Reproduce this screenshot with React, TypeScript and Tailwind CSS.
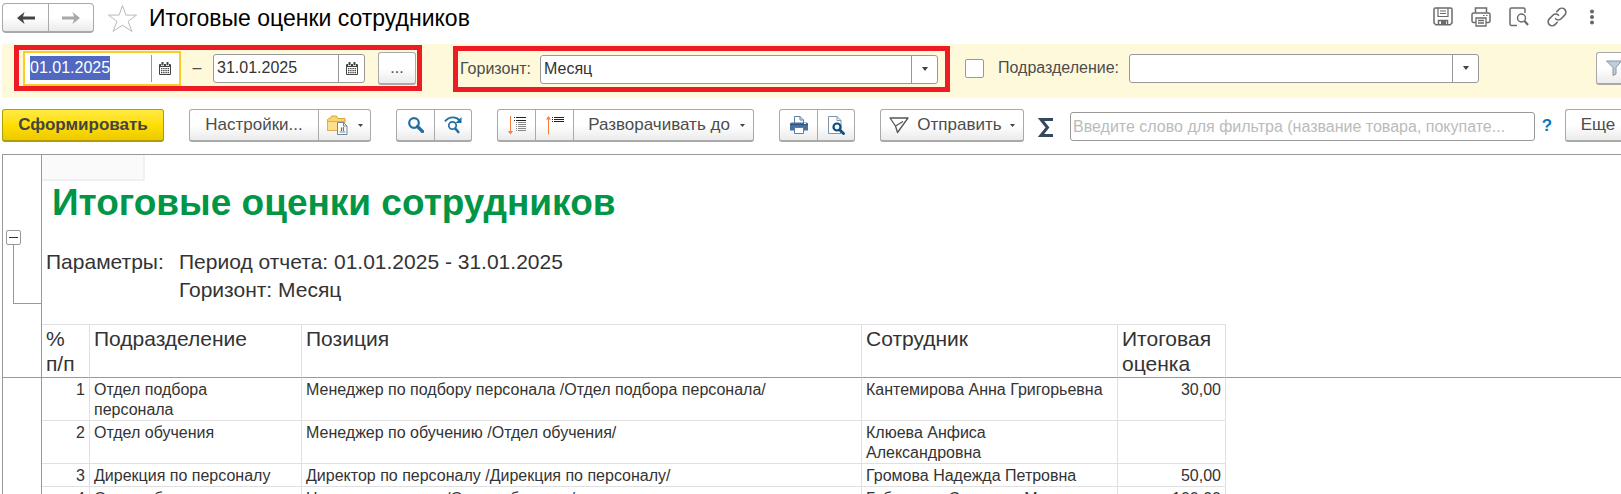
import { useEffect, useRef } from "react";
import type { ReactNode } from "react";

const rows = [
  {
    id: 1,
    department: "Отдел подбора\nперсонала",
    position: "Менеджер по подбору персонала /Отдел подбора персонала/",
    employee: "Кантемирова Анна Григорьевна",
    score: "30,00",
  },
  {
    id: 2,
    department: "Отдел обучения",
    position: "Менеджер по обучению /Отдел обучения/",
    employee: "Клюева Анфиса\nАлександровна",
    score: "",
  },
  {
    id: 3,
    department: "Дирекция по персоналу",
    position: "Директор по персоналу /Дирекция по персоналу/",
    employee: "Громова Надежда Петровна",
    score: "50,00",
  },
  {
    id: 4,
    department: "Отдел обучения",
    position: "Начальник отдела /Отдел обучения/",
    employee: "Габдулина Светлана Марковна",
    score: "100,00",
  },
];

const buttonSkin =
  "flex shrink-0 items-center justify-center border border-[#a9a9a9] border-b-2 bg-gradient-to-b from-white from-50% to-[#ebebeb]";

function Caret() {
  return (
    <svg width="6" height="4" viewBox="0 0 6 4" fill="#444" aria-hidden="true">
      <path d="M0 0h6L3.500 3.500h-1z" />
    </svg>
  );
}

function SmallCaret() {
  return (
    <svg width="5" height="3" viewBox="0 0 5 3" fill="#444" aria-hidden="true">
      <path d="M0 0h5L2.500 3z" />
    </svg>
  );
}

function CalendarIcon() {
  return (
    <svg width="12" height="13" viewBox="0 0 12 13" fill="#444" aria-hidden="true">
      <path d="M1 2h10a1 1 0 0 1 1 1v9a1 1 0 0 1-1 1H1a1 1 0 0 1-1-1V3a1 1 0 0 1 1-1z" />
      <path d="M1 5h10v7H1z" fill="#fff" />
      <path d="M2 6h1.400v1.300H2zM4.200 6h1.400v1.300H4.200zM6.400 6h1.400v1.300H6.400zM8.600 6H10v1.300H8.600z" />
      <path d="M2 8h1.400v1.300H2zM4.200 8h1.400v1.300H4.200zM6.400 8h1.400v1.300H6.400zM8.600 8H10v1.300H8.600z" />
      <path d="M2 10h1.400v1.300H2zM4.200 10h1.400v1.300H4.200zM6.400 10h1.400v1.300H6.400zM8.600 10H10v1.300H8.600z" />
      <path d="M2 0h3v4H2zM7 0h3v4H7z" fill="#fff" />
      <path d="M2.500 0h2v3.300h-2zM7.500 0h2v3.300h-2z" />
    </svg>
  );
}

function SelectBox({
  label,
  className,
  arrowClass,
  children,
}: {
  label: string;
  className: string;
  arrowClass: string;
  children: ReactNode;
}) {
  return (
    <div className={`relative h-[29px] ${className}`}>
      <select
        id={label}
        className="h-full w-full appearance-none rounded-[3px] border border-[#999] bg-white pl-[3px] text-[#333] outline-none"
      >
        {children}
      </select>
      <span
        className={`pointer-events-none absolute inset-y-0 right-0 flex items-center justify-center border-l border-[#999] ${arrowClass}`}
      >
        <Caret />
      </span>
    </div>
  );
}

function TitleBar() {
  return (
    <header className="flex h-11 items-start pt-[3px]">
      <div className="flex h-[30px]">
        <button
          aria-label="Назад"
          className={`w-[47px] rounded-l-[4px] ${buttonSkin}`}
        >
          <svg width="18" height="12" viewBox="0 0 18 12" fill="#444" aria-hidden="true">
            <path d="M7.500 0L0 6l7.500 6L6 7.500h12v-3H6z" />
          </svg>
        </button>
        <button
          aria-label="Вперед"
          className={`-ml-px w-[46px] rounded-r-[4px] ${buttonSkin}`}
        >
          <svg width="18" height="12" viewBox="0 0 18 12" fill="#a8a8a8" aria-hidden="true">
            <path d="M10.500 0L18 6l-7.500 6L12 7.500H0v-3h12z" />
          </svg>
        </button>
      </div>
      <button aria-label="В избранное" className="ml-3">
        <svg width="32" height="30" viewBox="0 0 32 30" fill="none" stroke="#b4bac0" aria-hidden="true">
          <path d="M16.500 2.500l3.400 9.600h10.600l-8.400 6.300 3.800 10-9.400-6.200-9.400 6.200 3.800-10-8.400-6.300h10.600z" />
        </svg>
      </button>
      <h1 className="ml-[11px] text-[23px] leading-[30px] text-black">
        Итоговые оценки сотрудников
      </h1>
      <div className="mr-[22px] ml-auto flex items-start gap-[18px] pt-[4px]">
        <button aria-label="Сохранить">
          <svg width="20" height="20" viewBox="0 0 20 20" fill="none" stroke="#6b6b6b" strokeWidth="1.500" aria-hidden="true">
            <path d="M1 2.500a1.500 1.500 0 0 1 1.500-1.500h15A1.500 1.500 0 0 1 19 2.500v13.500l-1.800 1.800H2.800L1 16z" />
            <path d="M5 1v8.500h10V1M7 4h6M7 6.500h6" strokeWidth="1.200" />
            <path d="M5.500 17.500v-4h9v4" />
            <path d="M8 14h5v3.500H8z" fill="#6b6b6b" stroke="none" />
          </svg>
        </button>
        <button aria-label="Печать">
          <svg width="20" height="20" viewBox="0 0 20 20" fill="none" stroke="#6b6b6b" strokeWidth="1.500" aria-hidden="true">
            <path d="M4.500 5.500V1h11v4.500" />
            <path d="M5 15.500H2.500A1.500 1.500 0 0 1 1 14V7.500A1.500 1.500 0 0 1 2.500 6h15A1.500 1.500 0 0 1 19 7.500V14a1.500 1.500 0 0 1-1.500 1.500H15" />
            <path d="M5 11h10v8H5zM7 13.500h6M7 16h6" strokeWidth="1.300" />
            <path d="M12 8.500h1.500M15 8.500h1.500" strokeWidth="1.200" />
          </svg>
        </button>
        <button aria-label="Предварительный просмотр">
          <svg width="20" height="20" viewBox="0 0 20 20" fill="none" stroke="#6b6b6b" strokeWidth="1.500" aria-hidden="true">
            <path d="M8 18.500H2.500A1.500 1.500 0 0 1 1 17V2.500A1.500 1.500 0 0 1 2.500 1h12A1.500 1.500 0 0 1 16 2.500V6" />
            <circle cx="12.500" cy="11" r="4" />
            <path d="M15.500 14l3.500 4" strokeWidth="2.200" />
          </svg>
        </button>
        <button aria-label="Получить ссылку">
          <svg width="20" height="20" viewBox="0 0 20 20" fill="none" stroke="#6b6b6b" strokeWidth="1.600" strokeLinecap="round" aria-hidden="true">
            <path d="M8.500 11.700a4 4 0 0 0 5.600 0l3.600-3.600a4 4 0 0 0-5.700-5.700l-2.300 2.300" />
            <path d="M11.500 8.300a4 4 0 0 0-5.600 0l-3.600 3.600a4 4 0 0 0 5.700 5.700l2.300-2.300" />
          </svg>
        </button>
        <button aria-label="Ещё" className="px-[3px]">
          <svg width="8" height="20" viewBox="0 0 8 20" fill="#666" aria-hidden="true">
            <circle cx="4" cy="4.500" r="2" />
            <circle cx="4" cy="10" r="2" />
            <circle cx="4" cy="15.500" r="2" />
          </svg>
        </button>
      </div>
    </header>
  );
}

function FilterBar() {
  const startRef = useRef<HTMLInputElement>(null);

  useEffect(() => {
    startRef.current?.focus();
    startRef.current?.select();
  }, []);

  return (
    <section className="flex h-[54px] items-start bg-[#fff9db] pt-px">
      <div className="ml-3 flex h-[46px] w-[408px] shrink-0 items-center border-5 border-[#ed1c24] pl-[4px]">
        <div className="flex h-[35px] w-[158px] items-stretch border-2 border-[#fdcb2b] bg-white p-0.5">
          <input
            ref={startRef}
            aria-label="Начало периода"
            defaultValue="01.01.2025"
            className="w-0 flex-1 pl-[3px] text-[#333] outline-none selection:bg-[#5068c0] selection:text-white"
          />
          <button
            aria-label="Выбрать начало периода"
            className="flex w-[26px] items-center justify-center border-l border-[#999]"
          >
            <CalendarIcon />
          </button>
        </div>
        <span className="w-8 text-center">–</span>
        <div className="flex h-[29px] w-[152px] rounded-[3px] border border-[#999] bg-white">
          <input
            aria-label="Конец периода"
            defaultValue="31.01.2025"
            className="w-0 flex-1 pl-[3px] text-[#333] outline-none"
          />
          <button
            aria-label="Выбрать конец периода"
            className="flex w-[26px] items-center justify-center border-l border-[#999]"
          >
            <CalendarIcon />
          </button>
        </div>
        <button
          aria-label="Выбрать период"
          className={`ml-[13px] h-[33px] w-[38px] rounded-[3px] ${buttonSkin}`}
        >
          ...
        </button>
      </div>

      <div className="mt-px ml-[31px] flex h-[46px] w-[497px] shrink-0 items-center border-5 border-[#ed1c24] pr-[7px] pl-0.5">
        <label htmlFor="horizon" className="w-20 shrink-0">
          Горизонт:
        </label>
        <SelectBox label="horizon" className="flex-1" arrowClass="w-[27px]">
          <option>Месяц</option>
        </SelectBox>
      </div>

      <div className="flex h-[46px] flex-1 items-center">
        <input
          type="checkbox"
          aria-label="Отбор по подразделению"
          className="ml-[15px] size-[19px] shrink-0 appearance-none rounded-[2px] border border-[#999] bg-white"
        />
        <label htmlFor="department" className="ml-3.5 w-[131px] shrink-0">
          Подразделение:
        </label>
        <SelectBox
          label="department"
          className="w-[350px] shrink-0"
          arrowClass="w-[27px]"
        >
          <option></option>
        </SelectBox>
        <button
          aria-label="Настройки отбора"
          className={`ml-auto h-[33px] w-[25px] rounded-l-[3px] border-r-0 ${buttonSkin}`}
        >
          <svg width="15" height="16" viewBox="0 0 15 16" className="ml-2 shrink-0" aria-hidden="true">
            <path d="M.5 1h15L10 7.500V14l-3 1.500V7.500z" fill="#c3cdd6" stroke="#8496a6" />
          </svg>
        </button>
      </div>
    </section>
  );
}

function Toolbar() {
  return (
    <section className="flex h-14 items-start pt-[11px] text-[17px]">
      <button className="h-[33px] w-[162px] shrink-0 rounded-[3px] border border-b-2 border-[#b39c00] bg-gradient-to-b from-[#ffea3d] via-[#ffdf00] to-[#ecc900] font-bold text-[#444]">
        Сформировать
      </button>

      <div className="ml-[25px] flex h-[33px] shrink-0">
        <button className={`w-[130px] rounded-l-[3px] ${buttonSkin}`}>
          Настройки...
        </button>
        <button
          aria-label="Варианты отчета"
          className={`-ml-px w-[53px] gap-[10px] rounded-r-[3px] ${buttonSkin}`}
        >
          <svg width="21" height="20" viewBox="0 0 21 20" aria-hidden="true">
            <path d="M.5 15.500V4.500l1-1H3l1.500-2.500h5L11 3.500h7v4" fill="#fbd46c" stroke="#d8a33c" />
            <path d="M.5 15.500v-9h17v9z" fill="#fddf8e" stroke="#e0ae4c" />
            <path d="M10.500 7.500h6l3.500 3.500v8.500h-9.500z" fill="#fff" stroke="#6f8799" />
            <path d="M16.500 7.500V11H20" fill="none" stroke="#6f8799" />
            <path d="M12.500 17h6" stroke="#6f8799" />
            <path d="M14.500 16v-3.500" stroke="#e03c31" strokeWidth="1.200" />
            <path d="M16.500 16v-4" stroke="#3f9c35" strokeWidth="1.200" />
          </svg>
          <SmallCaret />
        </button>
      </div>

      <div className="ml-[25px] flex h-[33px] shrink-0">
        <button aria-label="Найти" className={`w-[39px] rounded-l-[3px] ${buttonSkin}`}>
          <svg width="16" height="16" viewBox="0 0 16 16" fill="none" stroke="#1f6fa5" aria-hidden="true">
            <circle cx="6" cy="6" r="4.800" strokeWidth="2.200" />
            <path d="M9.500 9.500l5 5" strokeWidth="3.200" strokeLinecap="round" />
          </svg>
        </button>
        <button aria-label="Найти далее" className={`-ml-px w-[38px] rounded-r-[3px] ${buttonSkin}`}>
          <svg width="19" height="18" viewBox="0 0 19 18" fill="none" stroke="#1f6fa5" aria-hidden="true">
            <path d="M1 5.500C3 2.500 6 1.300 9 1.300c3 0 5 1.200 6.500 3" strokeWidth="1.800" />
            <path d="M17.500 1v6h-6z" fill="#1f6fa5" stroke="none" />
            <circle cx="8.500" cy="9.500" r="3.700" strokeWidth="1.700" />
            <path d="M11.300 12.500l3 3.500" strokeWidth="2.600" strokeLinecap="round" />
          </svg>
        </button>
      </div>

      <div className="ml-[25px] flex h-[33px] shrink-0">
        <button aria-label="Развернуть группы" className={`w-[39px] rounded-l-[3px] ${buttonSkin}`}>
          <svg width="18" height="19" viewBox="0 0 18 19" fill="none" aria-hidden="true">
            <path d="M2.500 0v16" stroke="#f47c3c" />
            <path d="M0 15h5l-2.500 3.500z" fill="#f47c3c" />
            <path d="M6 1.500h1M8 1.500h10M6 4.500h1M8 4.500h10" stroke="#222" />
            <path d="M8 6.500h1M10 6.500h8M8 8.500h1M10 8.500h8M8 10.500h1M10 10.500h8M8 12.500h1M10 12.500h8M8 14.500h1M10 14.500h8" stroke="#888" />
          </svg>
        </button>
        <button aria-label="Свернуть группы" className={`-ml-px w-[39px] ${buttonSkin}`}>
          <svg width="18" height="19" viewBox="0 0 18 19" fill="none" aria-hidden="true">
            <path d="M2.500 2v16.500" stroke="#f47c3c" />
            <path d="M0 3.500h5L2.500 0z" fill="#f47c3c" />
            <path d="M6 1.500h1M8 1.500h10M6 3.500h1M8 3.500h10M6 5.500h1M8 5.500h10" stroke="#222" />
          </svg>
        </button>
        <button className={`-ml-px w-[181px] gap-[10px] rounded-r-[3px] pl-[6px] ${buttonSkin}`}>
          Разворачивать до
          <SmallCaret />
        </button>
      </div>

      <div className="ml-[25px] flex h-[33px] shrink-0">
        <button aria-label="Печать отчета" className={`w-[39px] rounded-l-[3px] ${buttonSkin}`}>
          <svg width="18" height="18" viewBox="0 0 18 18" aria-hidden="true">
            <path d="M4.500 7V.5H10l3.500 3.500v3" fill="#fff" stroke="#5b7ea3" />
            <path d="M10 .5V4h3.500" fill="none" stroke="#5b7ea3" />
            <path d="M1.500 6.500h15A1.500 1.500 0 0 1 18 8v6.500H0V8a1.500 1.500 0 0 1 1.500-1.500z" fill="#47709c" />
            <path d="M0 8.500h18" stroke="#2f557f" />
            <path d="M14 7.500h2" stroke="#fff" />
            <path d="M4.500 11.500h9v6h-9z" fill="#fff" stroke="#5b7ea3" />
          </svg>
        </button>
        <button aria-label="Просмотр" className={`-ml-px w-[38px] rounded-r-[3px] ${buttonSkin}`}>
          <svg width="17" height="19" viewBox="0 0 17 19" fill="none" aria-hidden="true">
            <path d="M.5 17.500V.5h8.500l4 4v13z" fill="#fff" stroke="#7d93a8" />
            <path d="M9 .5v4h4" stroke="#7d93a8" />
            <circle cx="9" cy="11" r="3.500" fill="#fff" stroke="#0b4f80" strokeWidth="2.200" />
            <path d="M11.800 14l3.700 3.500" stroke="#0b4f80" strokeWidth="2.800" strokeLinecap="round" />
          </svg>
        </button>
      </div>

      <button className={`ml-[25px] h-[33px] w-[144px] gap-2 rounded-[3px] ${buttonSkin}`}>
        <svg width="20" height="17" viewBox="0 0 20 17" fill="none" stroke="#555" strokeWidth="1.300" strokeLinejoin="round" aria-hidden="true">
          <path d="M1 1h18L8.500 15.500l-2-6.500zM6.500 9L14 4.500" />
        </svg>
        Отправить
        <SmallCaret />
      </button>

      <button aria-label="Сумма" className="mt-[9px] ml-[14px] shrink-0">
        <svg width="16" height="19" viewBox="0 0 16 19" fill="none" stroke="#34495e" strokeWidth="3" aria-hidden="true">
          <path d="M15 1.500H3l6.500 8-6.500 8h12" />
        </svg>
      </button>

      <input
        type="search"
        aria-label="Фильтр"
        placeholder="Введите слово для фильтра (название товара, покупате..."
        className="mt-[3px] ml-4 h-[29px] min-w-0 flex-1 rounded-[3px] border border-[#999] bg-white px-0.5 text-[16px] text-ellipsis outline-none placeholder:text-[#bbb]"
      />
      <button aria-label="Справка" className="mt-0.5 w-[30px] shrink-0 pr-1.5 leading-[30px] font-bold text-[#1272b8]">
        ?
      </button>
      <button className={`h-[33px] w-14 rounded-l-[3px] border-r-0 pl-[9px] ${buttonSkin}`}>
        Еще
      </button>
    </section>
  );
}

function Report() {
  const headCell =
    "border-t border-r border-t-[#e0e0e0] border-r-[#e0e0e0] border-b border-b-[#999] px-[4px] py-px";
  const cell =
    "border-r border-b border-[#e0e0e0] px-[4px] pt-0.5 whitespace-pre-line";

  return (
    <main className="min-h-0 flex-1 overflow-hidden border-t border-l border-[#999] text-[#333]">
      <div className="flex h-[169px]">
        <div className="w-[38px] shrink-0 pt-[75px] pl-[3px]">
          <button
            aria-label="Свернуть группу"
            className="flex size-[15px] items-center justify-center rounded-[2px] border border-[#999]"
          >
            <span className="h-px w-[9px] bg-[#333]" />
          </button>
          <div className="ml-[7px] h-[59px] border-b border-l border-[#999]" />
        </div>
        <div className="flex-1 border-l border-[#999]">
          <div className="h-[26px] w-[103px] border-r-2 border-b-2 border-[#f0f0f0] bg-[#fafafa]" />
          <h2 className="pl-[10px] text-[37px] leading-[44px] font-bold text-[#009646]">
            Итоговые оценки сотрудников
          </h2>
          <dl className="mt-[23px] flex text-[21px] leading-7">
            <dt className="w-[137px] pl-[4px]">Параметры:</dt>
            <dd>
              Период отчета: 01.01.2025 - 31.01.2025
              <br />
              Горизонт: Месяц
            </dd>
          </dl>
        </div>
      </div>

      <table className="w-full table-fixed border-separate border-spacing-0 text-left leading-5">
        <colgroup>
          <col className="w-[39px]" />
          <col className="w-[48px]" />
          <col className="w-[212px]" />
          <col className="w-[560px]" />
          <col className="w-[256px]" />
          <col className="w-[108px]" />
          <col />
        </colgroup>
        <thead className="align-top text-[21px] leading-[25px]">
          <tr className="[&>th]:font-normal">
            <td className="border-r border-b border-[#999]" />
            <th className={headCell}>% п/п</th>
            <th className={headCell}>Подразделение</th>
            <th className={headCell}>Позиция</th>
            <th className={headCell}>Сотрудник</th>
            <th className={headCell}>Итоговая оценка</th>
            <td className="border-b border-[#999]" />
          </tr>
        </thead>
        <tbody className="align-top">
          {rows.map((row) => (
            <tr key={row.id}>
              <td className="border-r border-[#999]" />
              <td className={`text-right ${cell}`}>{row.id}</td>
              <td className={cell}>{row.department}</td>
              <td className={cell}>{row.position}</td>
              <td className={cell}>{row.employee}</td>
              <td className={`text-right ${cell}`}>{row.score}</td>
              <td />
            </tr>
          ))}
        </tbody>
      </table>
    </main>
  );
}

export default function App() {
  return (
    <div className="flex h-screen flex-col overflow-hidden bg-white pl-0.5 font-['Liberation_Sans',Arial,sans-serif] text-[16px] text-[#4d4d4d]">
      <TitleBar />
      <FilterBar />
      <Toolbar />
      <Report />
    </div>
  );
}
